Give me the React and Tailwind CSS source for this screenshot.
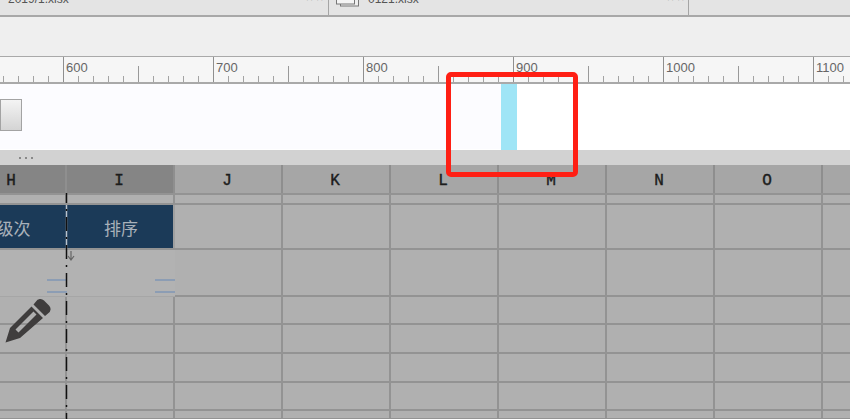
const cols = ["H", "I", "J", "K", "L", "M", "N", "O", "P"];
const rulerMarks = [500, 600, 700, 800, 900, 1000, 1100];
const ticks = [15, 30, 45, 60, 75, 90, 105, 120, 135];

function RulerSegment({ label }) {
  return (
    <div className="relative w-[150px] shrink-0 h-full border-l border-[#8f8f8f]">
      <span className="absolute left-[2px] top-[4px] text-[13px] leading-[14px] text-[#666]">{label}</span>
      <svg width="150" height="25" className="absolute left-0 top-0">
        {ticks.map((t) => (
          <line key={t} x1={t - 0.5} x2={t - 0.5} y1={t === 75 ? 9 : 19} y2="25" stroke={t === 75 ? "#999" : "#a3a3a3"} />
        ))}
      </svg>
    </div>
  );
}

function Row({ height, children }) {
  return (
    <div className="flex border-b-2 border-[#939393] shrink-0" style={{ height }}>
      {children}
    </div>
  );
}

function Cell({ className = "border-[#939393]", children }) {
  return <div className={`w-[108px] shrink-0 border-r-2 ${className}`}>{children}</div>;
}

export default function App() {
  const bodyRows = [28, 29, 29, 28, 9];

  return (
    <div className="relative w-[850px] h-[419px] overflow-hidden bg-[#b0b0b0] font-['Liberation_Sans',sans-serif]">
      {/* tab strip */}
      <div className="flex h-[17px] bg-[#e4e4e4] border-b-2 border-[#a8a8a8]">
        <div className="w-[329px] border-r border-[#a5a5a5] relative overflow-hidden">
          <span className="absolute left-[8px] top-[-10px] text-[12px] text-[#555]">2019/1.xlsx</span>
          <span className="absolute left-[306px] top-[-11px] text-[12px] text-[#888]">× ×</span>
        </div>
        <div className="w-[360px] border-r border-[#a5a5a5] relative overflow-hidden">
          <svg width="26" height="16" className="absolute left-[6px] top-0">
            <rect x="5.500" y="-6" width="18" height="12" fill="#eee" stroke="#777" />
            <rect x="1.500" y="-8" width="18" height="12" fill="#f4f4f4" stroke="#777" />
          </svg>
          <span className="absolute left-[39px] top-[-10px] text-[12px] text-[#555]">0121.xlsx</span>
          <span className="absolute left-[338px] top-[-11px] text-[12px] text-[#888]">× ×</span>
        </div>
      </div>

      {/* toolbar */}
      <div className="h-[40px] bg-[#efefef] border-b border-[#a9a9a9]" />

      {/* ruler */}
      <div className="flex h-[27px] ml-[-87px] w-[1100px] bg-[#f6f6f6] border-b-2 border-[#a9a9a9]">
        {rulerMarks.map((m) => (
          <RulerSegment key={m} label={m} />
        ))}
      </div>

      {/* timeline track */}
      <div className="flex h-[66px] bg-white">
        <div className="w-[501px] h-[65px] bg-[#fcfcff] flex items-center">
          <div className="w-[22px] h-[32px] mt-[-3px] border border-[#a3a3a3] bg-gradient-to-b from-[#f4f4f4] to-[#d4d4d4]" />
        </div>
        <div className="w-[16px] h-[66px] bg-[#9fe5f6]" />
      </div>

      {/* splitter */}
      <div className="h-[15px] bg-[#d2d2d2] flex items-center pl-[19px] gap-[4px]">
        <span className="w-[2px] h-[2px] bg-[#888]" />
        <span className="w-[2px] h-[2px] bg-[#888]" />
        <span className="w-[2px] h-[2px] bg-[#888]" />
      </div>

      {/* sheet */}
      <div className="ml-[-41px] flex flex-col w-[972px] font-['Liberation_Mono',monospace]">
        <Row height={30}>
          {cols.map((c, i) => (
            <Cell
              key={c}
              className={`flex items-center justify-center pt-[3px] pr-[2px] text-[16px] text-[#1c1c1c] [-webkit-text-stroke:0.4px_#1c1c1c] ${i < 2 ? "bg-[#858585] border-[#8f8f8f]" : "bg-[#a6a6a6] border-[#8e8e8e]"}`}
            >
              {c}
            </Cell>
          ))}
        </Row>
        <Row height={10}>
          {cols.map((c) => (
            <Cell key={c} />
          ))}
        </Row>
        <Row height={45}>
          {cols.map((c, i) =>
            i < 2 ? (
              <Cell
                key={c}
                className={`bg-[#1b3a58] flex items-center justify-center text-[17px] text-[#a9b1ba] font-['Noto_Sans_CJK_SC',sans-serif] ${i === 0 ? "border-[#1b3a58]" : "border-[#a0a0a0]"}`}
              >
                {i === 0 ? <span className="ml-[-14px] mt-[3px]">层级次</span> : <span className="ml-[2px] mt-[3px]">排序</span>}
              </Cell>
            ) : (
              <Cell key={c} />
            ),
          )}
        </Row>
        <Row height={47}>
          {cols.map((c, i) =>
            i < 2 ? (
              <div key={c} className="relative w-[108px] shrink-0 h-[47px] bg-[#b2b2b2] border-b border-[#a6a6a6]">
                <div className="absolute right-0 top-[29px] w-[20px] h-[14px] border-y-2 border-[#8c9db4]" />
              </div>
            ) : (
              <Cell key={c} />
            ),
          )}
        </Row>
        {bodyRows.map((h, r) => (
          <Row key={r} height={h}>
            {cols.map((c) => (
              <Cell key={c} />
            ))}
          </Row>
        ))}
      </div>

      {/* page break line */}
      <svg width="3" height="226" className="absolute left-[65px] top-[193px]">
        <line x1="1.500" x2="1.500" y1="12" y2="56" stroke="#b9c3cc" strokeWidth="1.500" />
        <line x1="1.500" x2="1.500" y1="0" y2="226" stroke="#111" strokeWidth="1.500" strokeDasharray="14 6 2 6" strokeDashoffset="4" />
      </svg>

      {/* drag cursor */}
      <svg width="8" height="10" viewBox="0 0 8 10" className="absolute left-[67px] top-[251px]">
        <path d="M4 0v8M1 5l3 4 3-4" fill="none" stroke="#666" strokeWidth="1.200" />
      </svg>

      {/* pencil */}
      <svg width="46" height="46" viewBox="0 0 46 46" className="absolute left-[5px] top-[298px]">
        <path d="M31 3.500a5 5 0 0 1 8-1l5 5a5 5 0 0 1-1 8l-3 2.500L28.500 6.500z" fill="#3f3d3d" />
        <path fillRule="evenodd" d="M26.500 8.500 38 20 15 40 .5 44.500 5 30zM28.500 13.500 10.500 31.500 13.500 34.500 31.500 16.500z" fill="#3f3d3d" />
      </svg>

      {/* red annotation box */}
      <div className="absolute left-[446px] top-[72px] w-[132px] h-[105px] border-[5px] border-[#ff1f14] rounded-[5px]" />
    </div>
  );
}
